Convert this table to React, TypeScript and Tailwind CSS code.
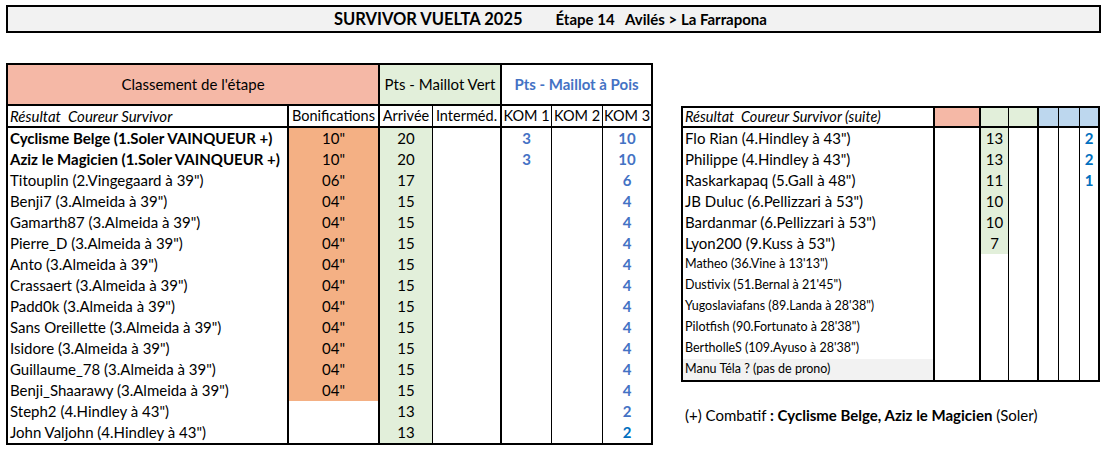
import React from "react"

const FONT = "font-['Lato','Noto_Sans',sans-serif]"

type Row = {
  name: string
  bold?: boolean
  bonif?: string
  arrivee?: string
  kom1?: string
  kom3?: string
  kom3Dark?: boolean
}

const almeida = (n: string): Row => ({ name: `${n} (3.Almeida à 39")`, bonif: '04"', arrivee: "15", kom3: "4" })

const leftRows: Row[] = [
  { name: "Cyclisme Belge (1.Soler VAINQUEUR +)", bold: true, bonif: '10"', arrivee: "20", kom1: "3", kom3: "10" },
  { name: "Aziz le Magicien (1.Soler VAINQUEUR +)", bold: true, bonif: '10"', arrivee: "20", kom1: "3", kom3: "10" },
  { name: 'Titouplin (2.Vingegaard à 39")', bonif: '06"', arrivee: "17", kom3: "6" },
  almeida("Benji7"),
  almeida("Gamarth87"),
  almeida("Pierre_D"),
  almeida("Anto"),
  almeida("Crassaert"),
  almeida("Padd0k"),
  almeida("Sans Oreillette"),
  almeida("Isidore"),
  almeida("Guillaume_78"),
  almeida("Benji_Shaarawy"),
  { name: 'Steph2 (4.Hindley à 43")', arrivee: "13", kom3: "2" },
  { name: 'John Valjohn (4.Hindley à 43")', arrivee: "13", kom3: "2", kom3Dark: true },
]

type RightRow = { name: string; arrivee?: string; kom3?: string; small?: boolean; grey?: boolean }

const rightRows: RightRow[] = [
  { name: 'Flo Rian (4.Hindley à 43")', arrivee: "13", kom3: "2" },
  { name: 'Philippe (4.Hindley à 43")', arrivee: "13", kom3: "2" },
  { name: 'Raskarkapaq (5.Gall à 48")', arrivee: "11", kom3: "1" },
  { name: 'JB Duluc (6.Pellizzari à 53")', arrivee: "10" },
  { name: 'Bardanmar (6.Pellizzari à 53")', arrivee: "10" },
  { name: 'Lyon200 (9.Kuss à 53")', arrivee: "7" },
  { name: "Matheo (36.Vine à 13'13\")", small: true },
  { name: "Dustivix (51.Bernal à 21'45\")", small: true },
  { name: "Yugoslaviafans (89.Landa à 28'38\")", small: true },
  { name: "Pilotfish (90.Fortunato à 28'38\")", small: true },
  { name: "BertholleS (109.Ayuso à 28'38\")", small: true },
  { name: "Manu Téla ? (pas de prono)", small: true, grey: true },
]

function LeftTable() {
  return (
    <div className="w-[647px] border-2 border-black">
      <div className="grid grid-cols-[279px_91px_54px_68px_51px_51px_49px]">
        {/* header 1 */}
        <div className="col-span-2 h-[41px] flex items-center justify-center bg-[#f5b8a6] border-b-2 border-black text-[15px]">
          Classement de l'étape
        </div>
        <div className="col-span-2 h-[41px] flex items-center justify-center bg-[#e2efda] border-b-2 border-l-2 border-black text-[15px]">
          Pts - Maillot Vert
        </div>
        <div className="col-span-3 h-[41px] flex items-center justify-center bg-white border-b-2 border-l-2 border-black text-[15px] font-bold text-[#4472c4]">
          Pts - Maillot à Pois
        </div>
        {/* header 2 */}
        <div className="h-[22px] flex items-center pl-[2px] border-b-2 border-black italic whitespace-pre text-[15px]">
          Résultat  Coureur Survivor
        </div>
        <div className="h-[22px] flex items-center justify-center border-b-2 border-l-2 border-black text-[14.5px]">Bonifications</div>
        <div className="h-[22px] flex items-center justify-center border-b-2 border-l-2 border-black text-[14.5px]">Arrivée</div>
        <div className="h-[22px] flex items-center justify-center border-b-2 border-l border-black text-[14.5px]">Interméd.</div>
        <div className="h-[22px] flex items-center justify-center border-b-2 border-l-2 border-black text-[14.5px]">KOM 1</div>
        <div className="h-[22px] flex items-center justify-center border-b-2 border-l border-black text-[14.5px]">KOM 2</div>
        <div className="h-[22px] flex items-center justify-center border-b-2 border-l border-black text-[14.5px]">KOM 3</div>
        {/* body */}
        {leftRows.map((r) => (
          <React.Fragment key={r.name}>
            <div className={`h-[21px] flex items-center pl-[2px] whitespace-nowrap text-[15px] ${r.bold ? "font-bold" : ""}`}>
              {r.name}
            </div>
            <div className={`h-[21px] flex items-center justify-center border-l-2 border-black text-[15px] ${r.bonif ? "bg-[#f4b084]" : "bg-white"}`}>
              {r.bonif}
            </div>
            <div className="h-[21px] flex items-center justify-center border-l-2 border-black bg-[#e2efda] text-[15px]">{r.arrivee}</div>
            <div className="h-[21px] border-l border-black" />
            <div className="h-[21px] flex items-center justify-center border-l-2 border-black text-[15px] font-bold text-[#4472c4]">{r.kom1}</div>
            <div className="h-[21px] border-l border-black" />
            <div className={`h-[21px] flex items-center justify-center border-l border-black text-[15px] font-bold ${r.kom3Dark ? "text-[#0070c0]" : "text-[#4472c4]"}`}>
              {r.kom3}
            </div>
          </React.Fragment>
        ))}
      </div>
    </div>
  )
}

function RightTable() {
  return (
    <div className="w-[419px] border-2 border-black">
      <div className="grid grid-cols-[250px_46px_29px_29px_21px_21px_19px]">
        <div className="h-[20px] flex items-center pl-[2px] border-b-2 border-black italic whitespace-pre text-[14.5px]">
          Résultat  Coureur Survivor (suite)
        </div>
        <div className="h-[20px] border-b-2 border-l-2 border-black bg-[#f5b8a6]" />
        <div className="h-[20px] border-b-2 border-l-2 border-black bg-[#e2efda]" />
        <div className="h-[20px] border-b-2 border-l border-black bg-[#e2efda]" />
        <div className="h-[20px] border-b-2 border-l-2 border-black bg-[#bdd7ee]" />
        <div className="h-[20px] border-b-2 border-l border-black bg-[#bdd7ee]" />
        <div className="h-[20px] border-b-2 border-l border-black bg-[#bdd7ee]" />
        {rightRows.map((r) => (
          <React.Fragment key={r.name}>
            <div
              className={`h-[21px] flex items-center pl-[2px] whitespace-nowrap ${r.small ? "text-[12.5px]" : "text-[15px]"} ${
                r.grey ? "bg-[#f2f2f2]" : ""
              }`}
            >
              {r.name}
            </div>
            <div className="h-[21px] border-l-2 border-black" />
            <div className={`h-[21px] flex items-center justify-center border-l-2 border-black text-[15px] ${r.arrivee ? "bg-[#e2efda]" : ""}`}>
              {r.arrivee}
            </div>
            <div className="h-[21px] border-l border-black" />
            <div className="h-[21px] border-l-2 border-black" />
            <div className="h-[21px] border-l border-black" />
            <div className="h-[21px] flex items-center justify-center border-l border-black text-[15px] font-bold text-[#0070c0]">{r.kom3}</div>
          </React.Fragment>
        ))}
      </div>
    </div>
  )
}

export default function App() {
  return (
    <div className={`w-[1111px] h-[449px] bg-white text-black ${FONT}`}>
      <div className="pt-[5px] pl-[6px]">
        <div className="w-[1095px] h-[28px] border-2 border-black bg-[#f2f2f2] flex items-center font-bold">
          <span className="ml-[326px] text-[16.5px]">SURVIVOR VUELTA 2025</span>
          <span className="ml-[33px] text-[15px] whitespace-pre">Étape 14   Avilés &gt; La Farrapona</span>
        </div>
        <div className="mt-[30px] flex items-start">
          <LeftTable />
          <div className="ml-[28px] mt-[43px] flex flex-col">
            <RightTable />
            <div className="mt-[22px] pl-[4px] text-[15px] whitespace-pre">
              (+) Combatif <span className="font-bold">: Cyclisme Belge, Aziz le Magicien</span> (Soler)
            </div>
          </div>
        </div>
      </div>
    </div>
  )
}
